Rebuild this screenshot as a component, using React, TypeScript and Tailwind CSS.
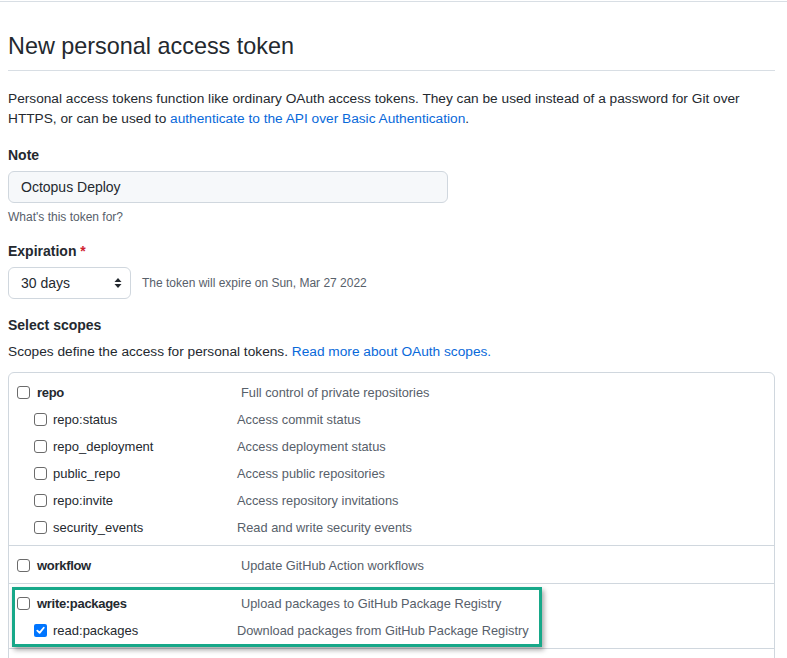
import type { ReactNode } from "react";

type Scope = {
  name: string;
  description: string;
  checked?: boolean;
};

const repoScopes: Scope[] = [
  { name: "repo:status", description: "Access commit status" },
  { name: "repo_deployment", description: "Access deployment status" },
  { name: "public_repo", description: "Access public repositories" },
  { name: "repo:invite", description: "Access repository invitations" },
  { name: "security_events", description: "Read and write security events" },
];

function Checkbox({ checked }: { checked?: boolean }) {
  if (checked) {
    return (
      <span className="flex h-[13px] w-[13px] shrink-0 items-center justify-center rounded-[2px] bg-[#0075ff]">
        <svg width="9" height="9" viewBox="0 0 10 10" fill="none">
          <path d="M1.5 5.2 L4 7.6 L8.6 2" stroke="white" strokeWidth="2" strokeLinecap="round" strokeLinejoin="round" />
        </svg>
      </span>
    );
  }
  return <span className="block h-[13px] w-[13px] shrink-0 rounded-[3px] border border-[#6b6b6b] bg-white" />;
}

function ScopeRow({ scope, nested, bold }: { scope: Scope; nested?: boolean; bold?: boolean }) {
  return (
    <div className={`flex h-[27px] items-center ${nested ? "pl-[25px]" : "pl-[8px]"}`}>
      <Checkbox checked={scope.checked} />
      <span
        className={`${nested ? "ml-[6px] w-[184px]" : "ml-[7px] w-[204px]"} text-[13px] ${bold ? "font-semibold tracking-[-0.3px]" : ""} text-[#24292f]`}
      >
        {scope.name}
      </span>
      <span className="text-[12.8px] text-[#57606a]">{scope.description}</span>
    </div>
  );
}

function ScopeGroup({ children, last }: { children: ReactNode; last?: boolean }) {
  return (
    <div className={`relative pt-[6px] pb-[4px] ${last ? "" : "border-b border-[#d0d7de]"}`}>{children}</div>
  );
}

export default function App() {
  return (
    <div className="min-h-screen bg-white font-['Liberation_Sans',Arial,sans-serif] text-[#24292f]">
      <div className="h-[2px] border-b border-[#d8dee4]" />
      <div className="ml-2 w-[767px]">
        <div className="mt-[26px] border-b border-[#d8dee4] pb-[6px]">
          <h1 className="text-[23.4px] leading-[36px] font-normal">New personal access token</h1>
        </div>

        <div className="mt-[18px] text-[13.7px] leading-[20px]">
          <div>Personal access tokens function like ordinary OAuth access tokens. They can be used instead of a password for Git over</div>
          <div className="flex whitespace-pre">
            <span>HTTPS, or can be used to </span>
            <a className="text-[#0969da]">authenticate to the API over Basic Authentication</a>
            <span>.</span>
          </div>
        </div>

        <div className="mt-[16px] text-[14px] leading-[20px] font-semibold">Note</div>
        <div className="mt-[6px] flex h-[32px] w-[440px] items-center rounded-md border border-[#d0d7de] bg-[#f6f8fa] px-[12px] text-[14px]">
          Octopus Deploy
        </div>
        <div className="mt-[5px] text-[12px] leading-[18px] text-[#57606a]">What's this token for?</div>

        <div className="mt-[15px] text-[14px] leading-[20px] font-semibold">
          Expiration <span className="text-[#cf222e]">*</span>
        </div>
        <div className="mt-[6px] flex items-center">
          <div className="flex h-[32px] w-[123px] items-center justify-between rounded-md border border-[#d0d7de] bg-white pl-[12px] pr-[8px] text-[14px]">
            <span>30 days</span>
            <svg width="8" height="12" viewBox="0 0 8 12" fill="#24292f">
              <path d="M4 1 L7.5 5 L0.5 5 Z" />
              <path d="M4 11 L7.5 7 L0.5 7 Z" />
            </svg>
          </div>
          <span className="ml-[11px] text-[12px] text-[#57606a]">The token will expire on Sun, Mar 27 2022</span>
        </div>

        <div className="mt-[16px] text-[14px] leading-[20px] font-semibold">Select scopes</div>
        <div className="mt-[7px] flex whitespace-pre text-[13.7px] leading-[20px]">
          <span>Scopes define the access for personal tokens. </span>
          <a className="text-[#0969da]">Read more about OAuth scopes.</a>
        </div>

        <div className="mt-[10px] rounded-md border border-[#d0d7de]">
          <ScopeGroup>
            <ScopeRow scope={{ name: "repo", description: "Full control of private repositories" }} bold />
            {repoScopes.map((s) => (
              <ScopeRow key={s.name} scope={s} nested />
            ))}
          </ScopeGroup>
          <ScopeGroup>
            <ScopeRow scope={{ name: "workflow", description: "Update GitHub Action workflows" }} bold />
          </ScopeGroup>
          <ScopeGroup>
            <ScopeRow scope={{ name: "write:packages", description: "Upload packages to GitHub Package Registry" }} bold />
            <ScopeRow scope={{ name: "read:packages", description: "Download packages from GitHub Package Registry", checked: true }} nested />
            <div className="pointer-events-none absolute left-[3px] top-[3px] h-[60px] w-[530px] border-[3px] border-[#17a889] shadow-[2px_3px_5px_rgba(0,0,0,0.35)]" />
          </ScopeGroup>
          <ScopeGroup last>
            <div className="h-[27px]" />
          </ScopeGroup>
        </div>
      </div>
    </div>
  );
}
